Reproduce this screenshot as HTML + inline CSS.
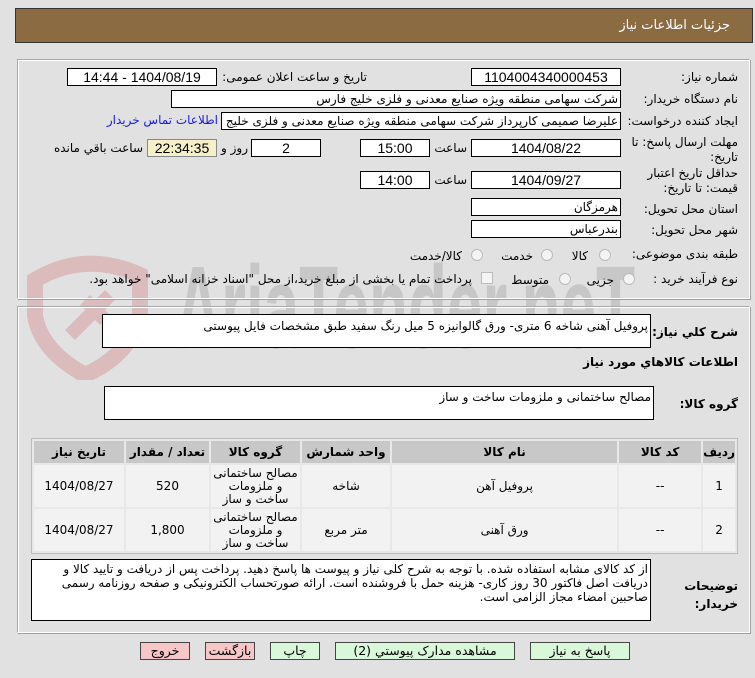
<!DOCTYPE html>
<html><head><meta charset="utf-8"><style>
*{margin:0;padding:0;box-sizing:border-box}
body{width:755px;height:678px;background:#e1e1e1;position:relative;overflow:hidden;font-family:"DejaVu Sans","Liberation Sans",sans-serif;font-size:12px;color:#000}
.a{position:absolute}
.hdr{left:15px;top:8px;width:738px;height:35px;background:#8b6c42;border:1px solid #333}
.hdr span{position:absolute;right:22px;top:9px;color:#fff;font-size:13px}
.fs{border:1px solid #a8a8a8;border-right-color:#fff;border-bottom-color:#fff;box-shadow:inset 1px 1px 0 #fff, 1px 1px 0 #a0a0a0}
.lbl{position:absolute;direction:rtl;white-space:nowrap;font-size:12px}
.box{position:absolute;background:#fff;border:1px solid #000;height:18px;direction:rtl;white-space:nowrap;overflow:hidden;font-size:12px;line-height:16px;padding:0 2px}
.c{text-align:center;font-family:"Liberation Sans",sans-serif;font-size:14px}
.rad{position:absolute;width:12px;height:12px;border-radius:50%;border:1px solid #bbb;background:#f4f4f4}
table{border-collapse:separate;border-spacing:2px;direction:rtl}
td,th{text-align:center;font-size:12px}
th{background:#c8c8c8;height:22px;font-weight:bold}
td{background:#f2f2f2}
.btn{position:absolute;top:642px;height:18px;border:1px solid #444;text-align:center;font-size:12.5px;line-height:16px;direction:rtl}
.g{background:#d9f7d9}.r{background:#f7c6c6}
</style></head><body>
<div class="a hdr"><span>جزئیات اطلاعات نیاز</span></div>

<svg class="a" style="left:15px;top:240px" width="620" height="140">
<path d="M20 40 Q70 10 125 35 L125 75 Q115 115 70 135 Q25 110 20 75 Z" fill="none" stroke="rgba(205,90,90,0.28)" stroke-width="16"/>
<path d="M55 95 L95 55 M70 60 L90 80" stroke="rgba(205,90,90,0.28)" stroke-width="14"/>
<text x="160" y="108" font-family="Liberation Sans" font-weight="bold" font-size="118" fill="rgba(140,140,140,0.3)" textLength="460" lengthAdjust="spacingAndGlyphs">AriaTender.neT</text>
</svg>

<div class="a fs" style="left:17px;top:59px;width:733px;height:240px"></div>
<div class="lbl" style="right:17px;top:70px">شماره نیاز:</div>
<div class="box c" style="left:471px;top:68px;width:150px">1104004340000453</div>
<div class="lbl" style="right:388px;top:70px">تاریخ و ساعت اعلان عمومی:</div>
<div class="box c" style="left:67px;top:68px;width:150px">1404/08/19 - 14:44</div>

<div class="lbl" style="right:17px;top:92px">نام دستگاه خریدار:</div>
<div class="box" style="left:171px;top:90px;width:450px">شرکت سهامی منطقه ویژه صنایع معدنی و فلزی خلیج فارس</div>

<div class="lbl" style="right:17px;top:114px">ایجاد کننده درخواست:</div>
<div class="box" style="left:221px;top:112px;width:400px">علیرضا صمیمی کارپرداز شرکت سهامی منطقه ویژه صنایع معدنی و فلزی خلیج فارس</div>
<div class="lbl" style="right:537px;top:113px;color:#1a1ae6">اطلاعات تماس خریدار</div>

<div class="lbl" style="right:17px;top:135px;line-height:15px;text-align:right">مهلت ارسال پاسخ: تا<br>تاریخ:</div>
<div class="box c" style="left:471px;top:139px;width:150px">1404/08/22</div>
<div class="lbl" style="right:288px;top:141px">ساعت</div>
<div class="box c" style="left:360px;top:139px;width:70px">15:00</div>
<div class="box c" style="left:251px;top:139px;width:70px">2</div>
<div class="lbl" style="right:507px;top:141px">روز و</div>
<div class="box c" style="left:147px;top:139px;width:70px;background:#f5f0c8;border-color:#888">22:34:35</div>
<div class="lbl" style="right:612px;top:141px">ساعت باقي مانده</div>

<div class="lbl" style="right:17px;top:166px;line-height:15px;text-align:right">حداقل تاریخ اعتبار<br>قیمت: تا تاریخ:</div>
<div class="box c" style="left:471px;top:171px;width:150px">1404/09/27</div>
<div class="lbl" style="right:288px;top:173px">ساعت</div>
<div class="box c" style="left:360px;top:171px;width:70px">14:00</div>

<div class="lbl" style="right:17px;top:202px">استان محل تحویل:</div>
<div class="box" style="left:471px;top:198px;width:150px">هرمزگان</div>
<div class="lbl" style="right:17px;top:223px">شهر محل تحویل:</div>
<div class="box" style="left:471px;top:220px;width:150px">بندرعباس</div>

<div class="lbl" style="right:17px;top:247px">طبقه بندی موضوعی:</div>
<div class="rad" style="left:599px;top:249px"></div><div class="lbl" style="right:167px;top:249px">کالا</div>
<div class="rad" style="left:541px;top:249px"></div><div class="lbl" style="right:222px;top:249px">خدمت</div>
<div class="rad" style="left:471px;top:249px"></div><div class="lbl" style="right:293px;top:249px">کالا/خدمت</div>

<div class="lbl" style="right:17px;top:272px">نوع فرآیند خرید :</div>
<div class="rad" style="left:623px;top:273px"></div><div class="lbl" style="right:141px;top:273px">جزیی</div>
<div class="rad" style="left:559px;top:273px"></div><div class="lbl" style="right:206px;top:273px">متوسط</div>
<div class="a" style="left:481px;top:272px;width:12px;height:12px;border:1px solid #bbb;background:#f4f4f4"></div>
<div class="lbl" style="right:283px;top:272px">پرداخت تمام یا بخشی از مبلغ خرید،از محل "اسناد خزانه اسلامی" خواهد بود.</div>

<div class="a fs" style="left:17px;top:306px;width:733px;height:327px"></div>
<div class="lbl" style="right:17px;top:325px;font-weight:bold;font-size:12px">شرح کلي نياز:</div>
<div class="box" style="left:102px;top:314px;width:549px;height:34px;line-height:22px">پروفیل آهنی شاخه 6 متری- ورق گالوانیزه 5 میل رنگ سفید طبق مشخصات فایل پیوستی</div>
<div class="lbl" style="right:17px;top:355px;font-weight:bold">اطلاعات کالاهاي مورد نياز</div>
<div class="lbl" style="right:17px;top:397px;font-weight:bold">گروه کالا:</div>
<div class="box" style="left:104px;top:386px;width:550px;height:34px;line-height:20px">مصالح ساختمانی و ملزومات ساخت و ساز</div>

<div class="a" style="left:31px;top:438px;width:707px;border:1px solid #bbb;background:#e8e8e8">
<table style="width:100%">
<tr><th style="width:28px">ردیف</th><th style="width:82px">کد کالا</th><th>نام کالا</th><th style="width:88px">واحد شمارش</th><th style="width:89px">گروه کالا</th><th style="width:83px">تعداد / مقدار</th><th style="width:90px">تاریخ نیاز</th></tr>
<tr style="height:42px"><td>1</td><td>--</td><td>پروفیل آهن</td><td>شاخه</td><td style="line-height:13px">مصالح ساختمانی و ملزومات ساخت و ساز</td><td>520</td><td>1404/08/27</td></tr>
<tr style="height:42px"><td>2</td><td>--</td><td>ورق آهنی</td><td>متر مربع</td><td style="line-height:13px">مصالح ساختمانی و ملزومات ساخت و ساز</td><td>1,800</td><td>1404/08/27</td></tr>
</table></div>

<div class="lbl" style="right:17px;top:577px;line-height:18px;font-weight:bold;text-align:right">توضیحات<br>خریدار:</div>
<div class="box" style="left:31px;top:559px;width:620px;height:62px;white-space:normal;line-height:14px;padding-top:2px">از کد کالای مشابه استفاده شده. با توجه به شرح کلی نیاز و پیوست ها پاسخ دهید. پرداخت پس از دریافت و تایید کالا و دریافت اصل فاکتور 30 روز کاری- هزینه حمل با فروشنده است. ارائه صورتحساب الکترونیکی و صفحه روزنامه رسمی صاحبین امضاء مجاز الزامی است.</div>

<div class="btn r" style="left:140px;width:50px">خروج</div>
<div class="btn r" style="left:205px;width:50px">بازگشت</div>
<div class="btn g" style="left:270px;width:50px">چاپ</div>
<div class="btn g" style="left:335px;width:180px">مشاهده مدارک پیوستي (2)</div>
<div class="btn g" style="left:530px;width:100px">پاسخ به نياز</div>
</body></html>
